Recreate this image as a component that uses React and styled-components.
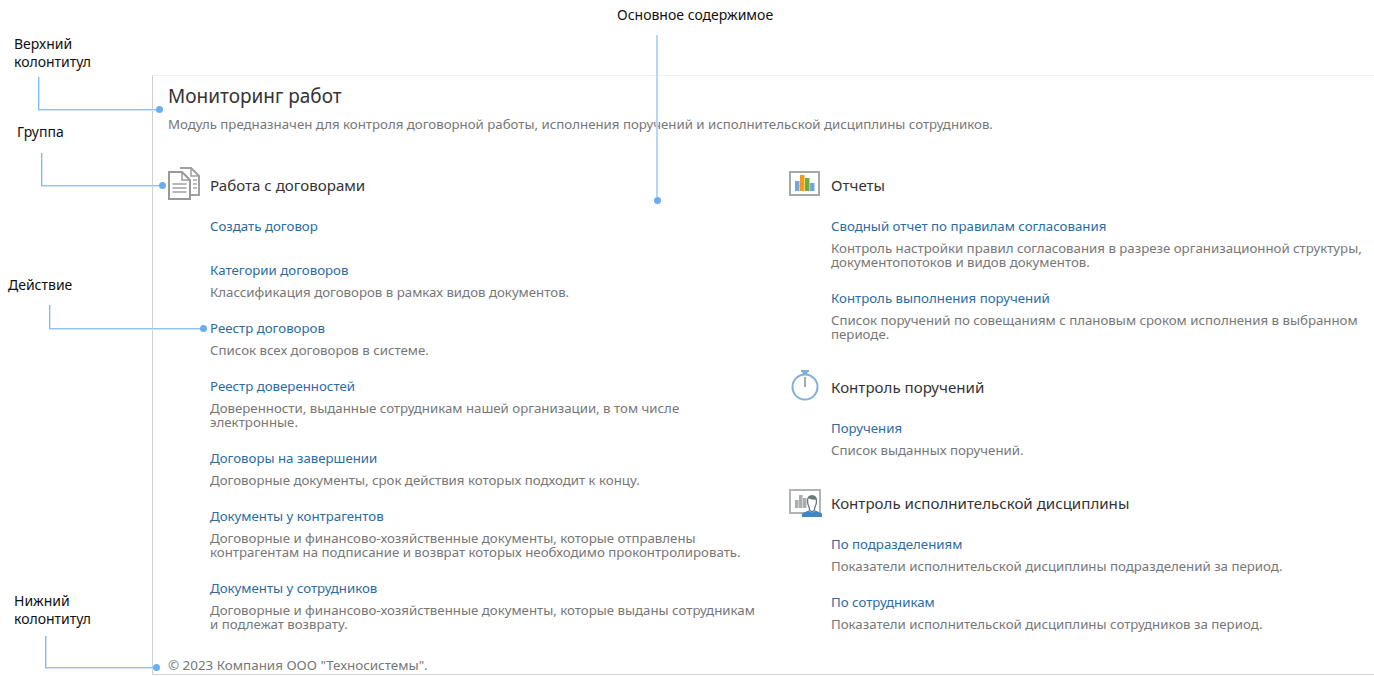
import styled, { createGlobalStyle } from "styled-components";

const GlobalStyle = createGlobalStyle`
  html, body {
    margin: 0;
    padding: 0;
    background: #fff;
  }
  body {
    font-family: "Noto Sans", "Open Sans", sans-serif;
  }
`;

const DocsIcon = () => (
  <svg width="34" height="36" viewBox="0 0 34 36" fill="none">
    <path d="M12 1H23L31 9V28H22" stroke="#a0a0a0" strokeWidth="2" />
    <path d="M23 1V9H31" stroke="#a0a0a0" strokeWidth="1.5" />
    <path d="M25 13H29M25 17H29M25 21H29" stroke="#a6a6a6" strokeWidth="1.5" />
    <path d="M1 5H14L22 13V32H1Z" fill="#fff" stroke="#999" strokeWidth="2" />
    <path d="M14 5V13H22" stroke="#999" strokeWidth="1.5" />
    <path d="M4.5 17H18.5M4.5 21H18.5M4.5 25H18.5" stroke="#a0a0a0" strokeWidth="1.5" />
  </svg>
);

const ChartIcon = () => (
  <svg width="32" height="28" viewBox="0 0 32 28" fill="none">
    <rect x="1" y="1" width="29" height="23" stroke="#a3a8ab" strokeWidth="2" />
    <rect x="6" y="10" width="4.5" height="10" fill="#6fa8dc" />
    <rect x="11" y="4" width="4.5" height="16" fill="#f29a1f" />
    <rect x="16" y="7" width="4.5" height="13" fill="#6cae2e" />
    <rect x="21" y="12" width="4.5" height="8" fill="#6fa8dc" />
  </svg>
);

const TimerIcon = () => (
  <svg width="32" height="34" viewBox="0 0 32 34" fill="none">
    <rect x="12" y="0" width="8" height="2" fill="#7fb0da" />
    <path d="M13 2H19L17.5 5H14.5Z" fill="#7fb0da" />
    <circle cx="16" cy="17" r="12.5" stroke="#7fb0da" strokeWidth="2" />
    <path d="M16 7V17" stroke="#8a8f94" strokeWidth="1.5" />
  </svg>
);

const DisciplineIcon = () => (
  <svg width="34" height="30" viewBox="0 0 34 30" fill="none">
    <rect x="1" y="2" width="30" height="23" stroke="#b0b4b7" strokeWidth="2" />
    <rect x="6" y="12" width="3.5" height="8" fill="#a8adb0" />
    <rect x="10" y="7" width="3.5" height="13" fill="#a8adb0" />
    <rect x="14" y="10" width="3.5" height="10" fill="#a8adb0" />
    <path
      d="M18.5 13C18.5 9.5 20.5 8 23 8C25.5 8 27.5 9.5 27.5 13C27.5 16.5 26 19 25.5 20.5V22L23 24L20.5 22V20.5C20 19 18.5 16.5 18.5 13Z"
      fill="#fff"
      stroke="#6f7579"
      strokeWidth="1.3"
    />
    <path d="M19 9.5C20.5 11.5 25 12 27 11.5C27 9 25 7.5 23 7.5C21 7.5 19.5 8.5 19 9.5Z" fill="#6f7579" />
    <path d="M13 29V25.5L19.5 22.5L23 25L26.5 22.5L33 25.5V29Z" fill="#3f86c4" />
  </svg>
);

const leftGroup = [
  { title: "Создать договор" },
  {
    title: "Категории договоров",
    text: "Классификация договоров в рамках видов документов.",
  },
  { title: "Реестр договоров", text: "Список всех договоров в системе." },
  {
    title: "Реестр доверенностей",
    text: "Доверенности, выданные сотрудникам нашей организации, в том числе\nэлектронные.",
  },
  {
    title: "Договоры на завершении",
    text: "Договорные документы, срок действия которых подходит к концу.",
  },
  {
    title: "Документы у контрагентов",
    text: "Договорные и финансово-хозяйственные документы, которые отправлены\nконтрагентам на подписание и возврат которых необходимо проконтролировать.",
  },
  {
    title: "Документы у сотрудников",
    text: "Договорные и финансово-хозяйственные документы, которые выданы сотрудникам\nи подлежат возврату.",
  },
];

const reports = [
  {
    title: "Сводный отчет по правилам согласования",
    text: "Контроль настройки правил согласования в разрезе организационной структуры,\nдокументопотоков и видов документов.",
  },
  {
    title: "Контроль выполнения поручений",
    text: "Список поручений по совещаниям с плановым сроком исполнения в выбранном\nпериоде.",
  },
];

const orders = [{ title: "Поручения", text: "Список выданных поручений." }];

const discipline = [
  {
    title: "По подразделениям",
    text: "Показатели исполнительской дисциплины подразделений за период.",
  },
  {
    title: "По сотрудникам",
    text: "Показатели исполнительской дисциплины сотрудников за период.",
  },
];

const callouts = [
  { label: "Верхний\nколонтитул", labelX: 14, labelY: 35, x: 38, y: 77, w: 121, h: 33 },
  { label: "Группа", labelX: 17, labelY: 123, x: 41, y: 153, w: 121, h: 33 },
  { label: "Действие", labelX: 8, labelY: 276, x: 49, y: 305, w: 154, h: 24 },
  { label: "Нижний\nколонтитул", labelX: 14, labelY: 592, x: 45, y: 636, w: 111, h: 32 },
];

const Group = ({ icon, title, items }) => (
  <GroupBlock>
    <GroupHead>
      <IconSlot>{icon}</IconSlot>
      <GroupTitle>{title}</GroupTitle>
    </GroupHead>
    {items.map((item) => (
      <Action key={item.title} $bare={!item.text}>
        <ActionLink href="#">{item.title}</ActionLink>
        {item.text && <ActionText>{item.text}</ActionText>}
      </Action>
    ))}
  </GroupBlock>
);

const App = () => (
  <>
    <GlobalStyle />
    <Page>
      <Panel>
        <Header>
          <Title>Мониторинг работ</Title>
          <Subtitle>
            Модуль предназначен для контроля договорной работы, исполнения
            поручений и исполнительской дисциплины сотрудников.
          </Subtitle>
        </Header>
        <Columns>
          <Column>
            <Group icon={<DocsIcon />} title="Работа с договорами" items={leftGroup} />
          </Column>
          <Column>
            <Group icon={<ChartIcon />} title="Отчеты" items={reports} />
            <Group icon={<TimerIcon />} title="Контроль поручений" items={orders} />
            <Group
              icon={<DisciplineIcon />}
              title="Контроль исполнительской дисциплины"
              items={discipline}
            />
          </Column>
        </Columns>
        <Footer>© 2023 Компания ООО "Техносистемы".</Footer>
      </Panel>

      <TopLabel>Основное содержимое</TopLabel>
      <VerticalLine />
      <Dot style={{ left: 654, top: 197 }} />
      {callouts.map((c) => (
        <div key={c.label}>
          <Label style={{ left: c.labelX, top: c.labelY }}>{c.label}</Label>
          <Elbow style={{ left: c.x, top: c.y, width: c.w, height: c.h }} />
          <Dot style={{ left: c.x + c.w - 3, top: c.y + c.h - 4 }} />
        </div>
      ))}
    </Page>
  </>
);

export default App;

const Page = styled.div`
  position: relative;
  width: 1374px;
  height: 676px;
  overflow: hidden;
  padding: 75px 0 0 152px;
  box-sizing: border-box;
`;

const Panel = styled.div`
  height: 600px;
  box-sizing: border-box;
  padding: 0 0 0 15px;
  border-left: 1px solid #cfcfcf;
  border-top: 1px solid #f0f0f0;
  border-bottom: 1px solid #d4d4d4;
  display: flex;
  flex-direction: column;
`;

const Header = styled.header`
  padding-top: 6px;
`;

const Title = styled.h1`
  margin: 0;
  font-size: 19px;
  font-weight: 400;
  line-height: 28px;
  color: #333;
`;

const Subtitle = styled.p`
  margin: 0;
  padding-top: 5px;
  font-size: 13.25px;
  line-height: 18px;
  color: #777;
  white-space: nowrap;
`;

const Columns = styled.div`
  display: grid;
  grid-template-columns: 621px 1fr;
  padding-top: 36px;
  flex: 1;
`;

const Column = styled.div`
  display: flex;
  flex-direction: column;
`;

const GroupBlock = styled.section`
  & + & {
    margin-top: 11px;
  }
`;

const GroupHead = styled.div`
  display: flex;
  align-items: center;
  height: 32px;
  margin-bottom: 15px;
`;

const IconSlot = styled.div`
  width: 42px;
  display: flex;
  align-items: center;
`;

const GroupTitle = styled.h2`
  margin: 0;
  font-size: 15.1px;
  font-weight: 400;
  color: #333;
`;

const Action = styled.div`
  margin-left: 42px;
  padding-bottom: ${(p) => (p.$bare ? "24px" : "19px")};
`;

const ActionLink = styled.a`
  display: block;
  font-size: 13.25px;
  line-height: 20px;
  color: #2b6ca3;
  text-decoration: none;
  white-space: nowrap;
`;

const ActionText = styled.p`
  margin: 5px 0 0;
  font-size: 13.25px;
  line-height: 14px;
  color: #777;
  white-space: pre-line;
`;

const Footer = styled.footer`
  font-size: 13.4px;
  line-height: 18px;
  color: #777;
`;

const Label = styled.div`
  position: absolute;
  font-size: 14px;
  line-height: 18px;
  color: #111;
  white-space: pre-line;
`;

const TopLabel = styled(Label)`
  left: 617px;
  top: 6px;
`;

const Elbow = styled.div`
  position: absolute;
  box-sizing: border-box;
  border-left: 1px solid #7db9f2;
  border-bottom: 1px solid #8fc3f4;
  box-shadow: inset 1px 0 0 #cfe4fa, 0 1px 0 #cfe4fa;
`;

const VerticalLine = styled.div`
  position: absolute;
  left: 656px;
  top: 35px;
  width: 2px;
  height: 165px;
  background: #b4d6f7;
`;

const Dot = styled.span`
  position: absolute;
  width: 7px;
  height: 7px;
  border-radius: 50%;
  background: #6aaef0;
`;
